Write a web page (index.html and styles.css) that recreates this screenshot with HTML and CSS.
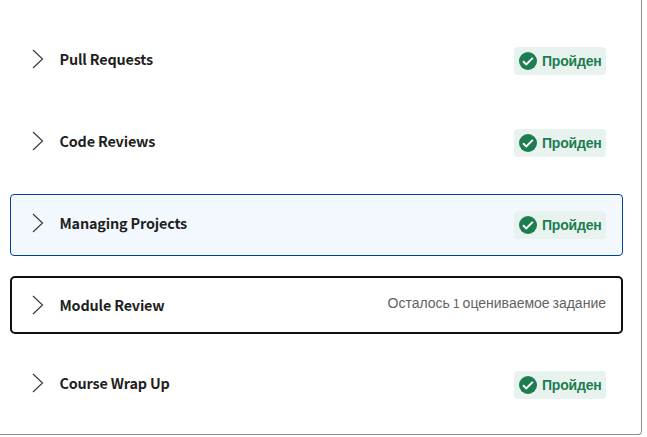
FILE: index.html
```html
<!DOCTYPE html>
<html lang="ru">
<head>
<meta charset="utf-8">
<title>Course modules</title>
<link rel="stylesheet" href="styles.css">
</head>
<body>
<svg class="defs" width="0" height="0">
<symbol id="chev" viewBox="0 0 12 20"><path d="M1 1l9.5 9L1 19" fill="none" stroke="#333" stroke-width="1.1"/></symbol>
<symbol id="check" viewBox="0 0 18 18"><circle cx="9" cy="9" r="9" fill="#1d7c50"/><path d="M4 9.2l3.3 3.2 6.5-6.5" fill="none" stroke="#fff" stroke-width="2"/></symbol>
</svg>
<main class="card">
<div class="row"><svg class="chev"><use href="#chev"/></svg><h3>Pull Requests</h3><span class="badge"><svg class="check"><use href="#check"/></svg><span class="done">Пройден</span></span></div>
<div class="row"><svg class="chev"><use href="#chev"/></svg><h3>Code Reviews</h3><span class="badge"><svg class="check"><use href="#check"/></svg><span class="done">Пройден</span></span></div>
<div class="row active"><svg class="chev"><use href="#chev"/></svg><h3>Managing Projects</h3><span class="badge"><svg class="check"><use href="#check"/></svg><span class="done">Пройден</span></span></div>
<div class="row focus"><svg class="chev"><use href="#chev"/></svg><h3>Module Review</h3><span class="left">Осталось<span class="num"> 1 </span>оцениваемое<span class="num"> </span>задание</span></div>
<div class="row"><svg class="chev"><use href="#chev"/></svg><h3>Course Wrap Up</h3><span class="badge"><svg class="check"><use href="#check"/></svg><span class="done">Пройден</span></span></div>
</main>
</body>
</html>
```
FILE: styles.css
```css
* { box-sizing: border-box; }
body { margin: 0; background: #fff; color: #1f1f1f; font-family: "Noto Sans CJK SC", sans-serif; overflow: hidden; }
.defs { display: none; }
.card { width: 642px; height: 435px; padding: 30px 18px 0 10px; border: 1px solid #8f8f8f; border-top: 0; border-left: 0; border-radius: 0 0 4px 0; display: flex; flex-direction: column; gap: 20px; }
.row { height: 62px; flex: none; display: flex; align-items: center; padding: 0 16px 0 21px; border: 1px solid transparent; border-radius: 4px; }
.active { background: #f3f8ff; border-color: #00419e; }
.focus { height: 58px; border: 2px solid #0f0f0f; border-radius: 5px; padding: 0 15px 0 20px; }
.chev { width: 12px; height: 20px; margin: -4px 15.5px 0 0; }
.focus .chev { margin-top: 0; }
h3 { margin: -4px auto 0 0; font-size: 14.4px; line-height: 20px; font-weight: 700; letter-spacing: -0.17px; white-space: nowrap; }
.focus h3 { margin-top: 0; }
.badge { display: flex; align-items: center; width: 92px; height: 28px; padding-left: 5px; gap: 5px; background: #e8f3ef; border-radius: 4px; }
.check { width: 18px; height: 18px; }
.done { font: bold 14px/20px "Liberation Sans", sans-serif; letter-spacing: -0.2px; color: #1d7c50; }
.left { font: 14px/20px "Liberation Sans", sans-serif; color: #636363; margin-top: -4px; white-space: nowrap; }
.num { font-family: "Noto Sans CJK SC", sans-serif; font-size: 12.7px; line-height: 1; }
```
